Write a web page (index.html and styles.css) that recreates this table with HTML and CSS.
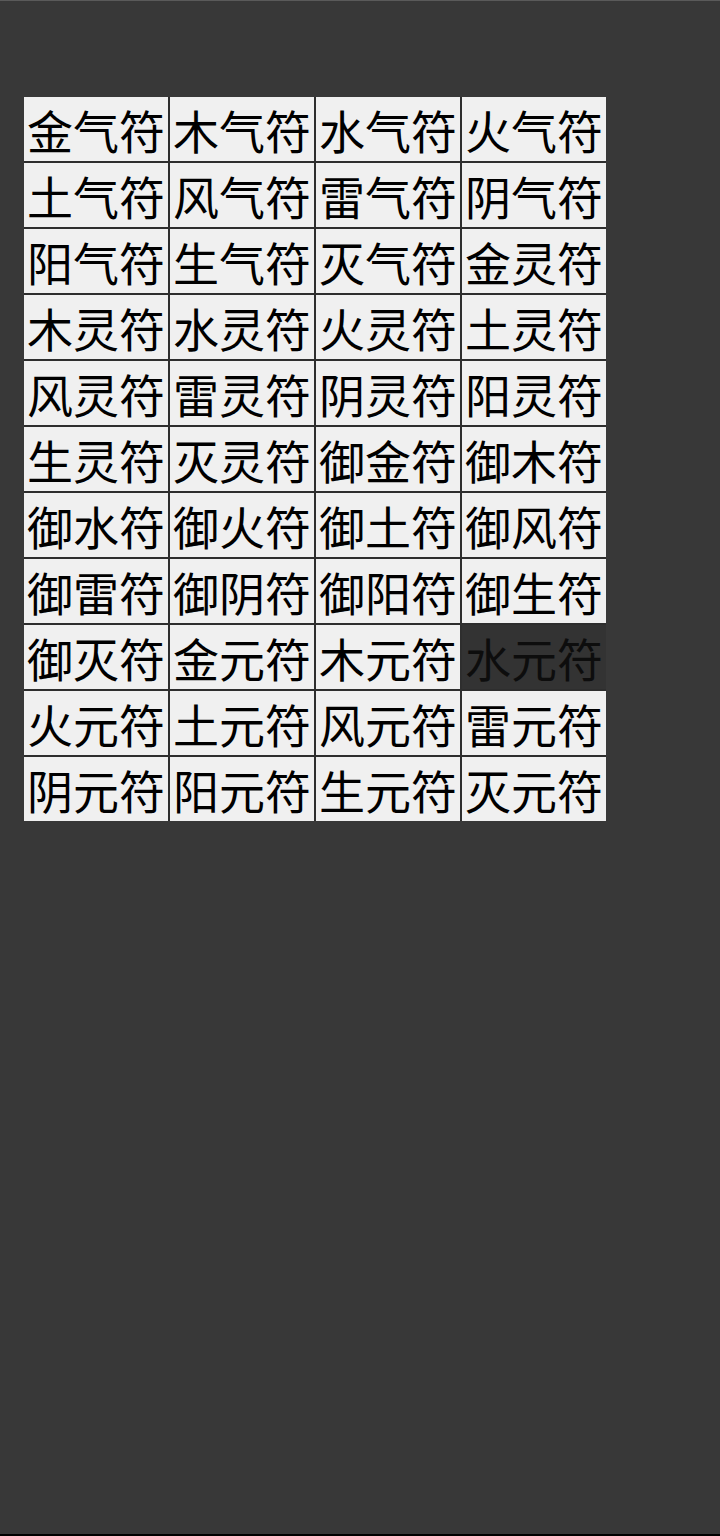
FILE: index.html
```html
<!DOCTYPE html>
<html lang="zh">
<head>
<meta charset="utf-8">
<title>符</title>
<link rel="stylesheet" href="styles.css">
</head>
<body>
<div class="screen">
  <div class="grid">
    <div class="cell">金气符</div><div class="cell">木气符</div><div class="cell">水气符</div><div class="cell">火气符</div>
    <div class="cell">土气符</div><div class="cell">风气符</div><div class="cell">雷气符</div><div class="cell">阴气符</div>
    <div class="cell">阳气符</div><div class="cell">生气符</div><div class="cell">灭气符</div><div class="cell">金灵符</div>
    <div class="cell">木灵符</div><div class="cell">水灵符</div><div class="cell">火灵符</div><div class="cell">土灵符</div>
    <div class="cell">风灵符</div><div class="cell">雷灵符</div><div class="cell">阴灵符</div><div class="cell">阳灵符</div>
    <div class="cell">生灵符</div><div class="cell">灭灵符</div><div class="cell">御金符</div><div class="cell">御木符</div>
    <div class="cell">御水符</div><div class="cell">御火符</div><div class="cell">御土符</div><div class="cell">御风符</div>
    <div class="cell">御雷符</div><div class="cell">御阴符</div><div class="cell">御阳符</div><div class="cell">御生符</div>
    <div class="cell">御灭符</div><div class="cell">金元符</div><div class="cell">木元符</div><div class="cell cell-active">水元符</div>
    <div class="cell">火元符</div><div class="cell">土元符</div><div class="cell">风元符</div><div class="cell">雷元符</div>
    <div class="cell">阴元符</div><div class="cell">阳元符</div><div class="cell">生元符</div><div class="cell">灭元符</div>
  </div>
</div>
</body>
</html>
```
FILE: styles.css
```css
html, body {
  margin: 0;
  padding: 0;
  background: #383838;
}
.screen {
  width: 720px;
  height: 1536px;
  box-sizing: border-box;
  background: #383838;
  border-top: 1px solid #5a5a5a;
  border-bottom: 2px solid #000;
  padding: 96px 0 0 24px;
}
.grid {
  display: grid;
  grid-template-columns: repeat(4, 144px);
  grid-auto-rows: 64px;
  gap: 2px;
  width: 582px;
  background: #2e2e2e;
}
.cell {
  background: #f0f0f0;
  color: #000;
  font-family: "Noto Sans CJK SC", "Noto Sans", sans-serif;
  font-size: 46px;
  line-height: 64px;
  text-align: center;
  white-space: nowrap;
  overflow: hidden;
}
.cell-active {
  background: #333333;
  color: #0d0d0d;
}
```
